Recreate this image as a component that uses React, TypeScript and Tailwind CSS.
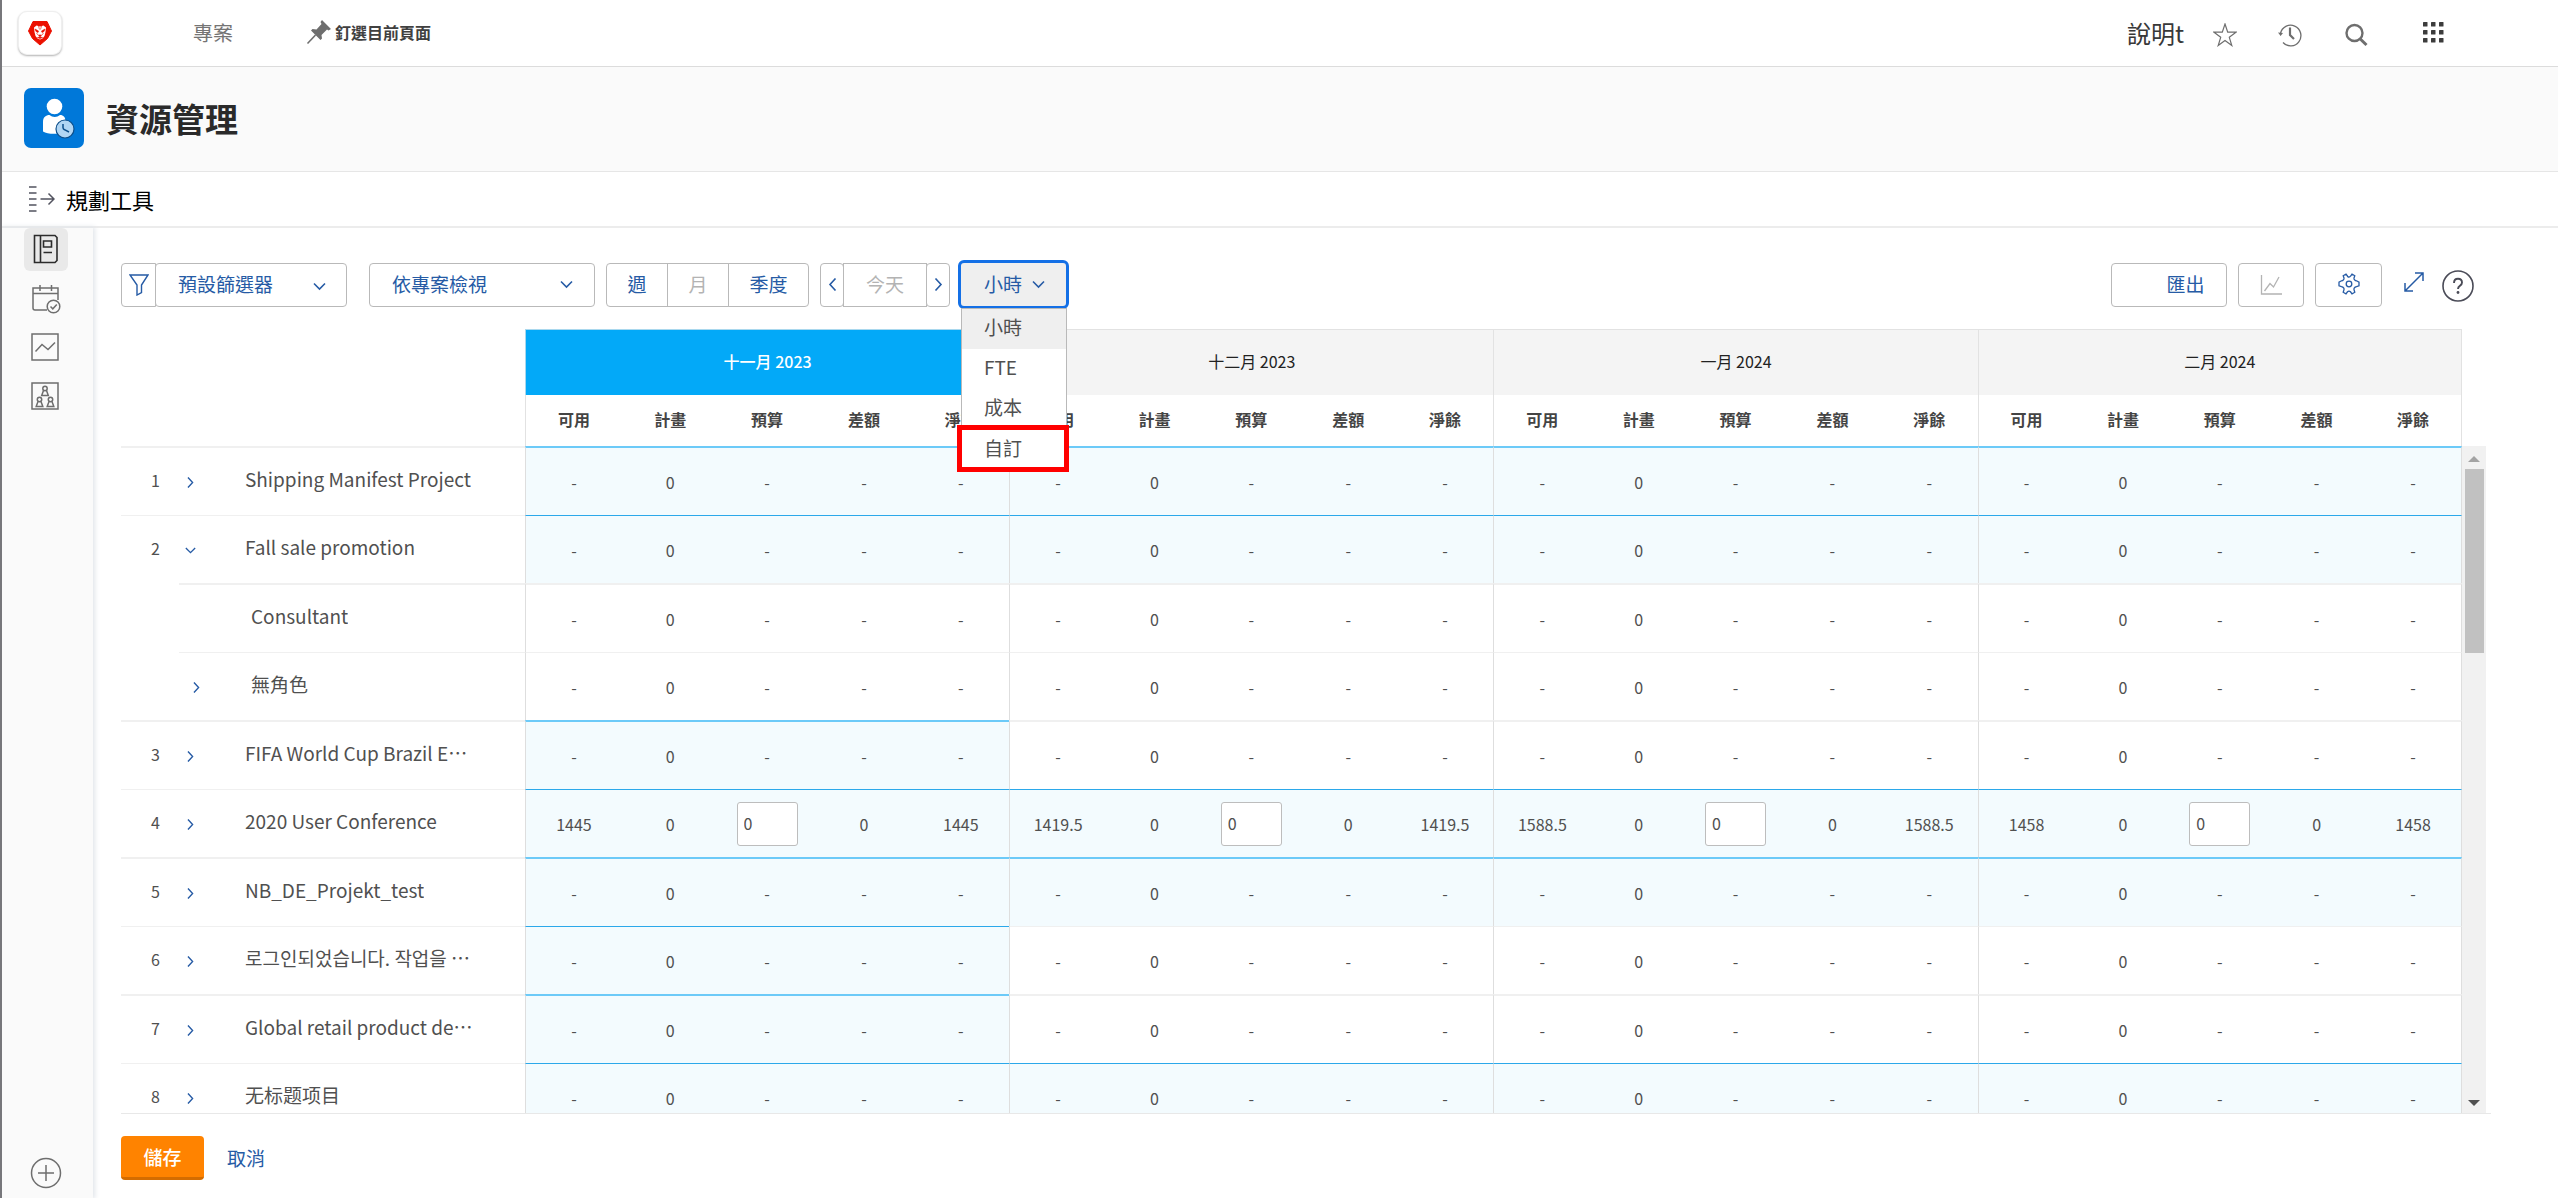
import React from "react";

const MONTHS = ["十一月 2023", "十二月 2023", "一月 2024", "二月 2024"];
const METRICS = ["可用", "計畫", "預算", "差額", "淨餘"];

type Row = {
  num?: string;
  name: string;
  open?: boolean;
  leaf?: boolean;
  tint: "all" | "first" | "none";
  hours?: string[];
};

const ROWS: Row[] = [
  { num: "1", name: "Shipping Manifest Project", tint: "all" },
  { num: "2", name: "Fall sale promotion", open: true, tint: "all" },
  { name: "Consultant", leaf: true, tint: "none" },
  { name: "無角色", tint: "none" },
  { num: "3", name: "FIFA World Cup Brazil E…", tint: "first" },
  { num: "4", name: "2020 User Conference", tint: "all", hours: ["1445", "1419.5", "1588.5", "1458"] },
  { num: "5", name: "NB_DE_Projekt_test", tint: "all" },
  { num: "6", name: "로그인되었습니다. 작업을 …", tint: "first" },
  { num: "7", name: "Global retail product de…", tint: "first" },
  { num: "8", name: "无标题项目", tint: "all" },
];

function Chevron({ dir = "down", className = "size-[13px]" }: { dir?: "down" | "left" | "right"; className?: string }) {
  const d = { down: "M1 3.5 6.5 9 12 3.5", left: "M9.5 0.5 4 6.5 9.5 12.5", right: "M3.5 0.5 9 6.5 3.5 12.5" }[dir];
  return (
    <svg viewBox="0 0 13 13" className={`fill-none stroke-current stroke-[1.6] ${className}`} aria-hidden="true">
      <path d={d} />
    </svg>
  );
}

function TopBar() {
  return (
    <header className="flex h-[67px] shrink-0 items-center border-b border-[#dcdcdc] bg-white pr-[114px] pl-4">
      <a href="#" aria-label="Home" className="flex size-11 items-center justify-center rounded-[9px] border border-[#efefef] bg-white shadow-[0_1px_2px_rgba(0,0,0,0.3)]">
        <svg viewBox="0 0 26 26" className="size-[26px]" aria-hidden="true">
          <path d="M6 1.5h14L24.500 11 20.500 18.500 13 25 5.500 18.500 1.500 11z" fill="#eb1000" stroke="#eb1000" strokeLinejoin="round" />
          <path d="M7 7.500 9.500 5.500 13 6.500 16.500 5.500 19 7.500 18.500 12 17.500 16 15.500 18.500 13 19.500 10.500 18.500 8.500 16 7.500 12z" fill="#fff" />
          <path d="M8 9 11.500 11 11 12.500 9 11.500zM18 9 14.500 11 15 12.500 17 11.500zM11.500 15h3L13.500 16.500h-1zM10.500 17.500 13 17l2.500.5L13 18.500zM11.500 6 12.500 9.500M14.500 6 13.500 9.500M9.500 13l1.500 2M16.500 13 15 15" fill="#eb1000" stroke="#eb1000" strokeWidth="0.600" />
        </svg>
      </a>
      <a href="#" className="ml-[131px] pb-px text-xl text-[#747474]">專案</a>
      <button type="button" className="ml-[73px] flex items-center gap-[3px] pb-0.5 text-base font-bold text-[#404040]">
        <svg viewBox="0 0 26 26" className="size-[26px]" aria-hidden="true">
          <path d="M16 1 25 10 22.500 11.500 21 10.500 15.500 16 16 19.500 14.500 21 5 11.500 6.500 10 10.500 10.500 15.500 5 14.500 3z" fill="#6e6e6e" />
          <path d="M9.500 16 1.500 24.500" stroke="#6e6e6e" strokeWidth="1.600" />
        </svg>
        釘選目前頁面
      </button>
      <div className="ml-auto flex items-center">
        <a href="#" className="pb-px text-2xl text-[#383838]">說明t</a>
        <button type="button" aria-label="Favorites" className="ml-[29px] flex pt-1">
          <svg viewBox="0 0 24 24" className="size-6 fill-none stroke-[#6e6e6e] stroke-[1.2]">
            <path d="M12 1 14.700 9.200H23L16.300 14.300 18.800 22.500 12 17.500 5.200 22.500 7.700 14.300 1 9.200H9.300z" />
          </svg>
        </button>
        <button type="button" aria-label="Recents" className="ml-[41px] flex pt-1">
          <svg viewBox="0 0 24 24" className="size-6 fill-none stroke-[#6e6e6e]">
            <path d="M2.500 10.500A10.300 10.300 0 1 1 5 19.500" strokeWidth="1.300" />
            <path d="M0 9.500 5 10 2.600 13z" className="fill-[#6e6e6e]" stroke="none" />
            <path d="M12 4.500V12L16 16" strokeWidth="2.200" />
          </svg>
        </button>
        <button type="button" aria-label="Search" className="ml-[42px] flex pt-1">
          <svg viewBox="0 0 24 24" className="size-6 fill-none stroke-[#6e6e6e]">
            <circle cx="10.500" cy="10" r="8" strokeWidth="2.400" />
            <path d="M15.800 15.500 22.500 22" strokeWidth="3" />
          </svg>
        </button>
        <button type="button" aria-label="Apps" className="ml-[55px] flex pb-px">
          <svg viewBox="0 0 21 21" className="size-[21px] fill-[#3c3c3c]">
            {[0, 8, 16].map((y) => [0, 8, 16].map((x) => <rect key={`${x}-${y}`} x={x} y={y} width="4.500" height="4.500" rx="0.600" />))}
          </svg>
        </button>
      </div>
    </header>
  );
}

function TitleBar() {
  return (
    <div className="flex h-[105px] shrink-0 items-center border-b border-[#e6e6e6] bg-[#fafafa] pb-0.5 pl-[22px]">
      <svg viewBox="0 0 60 60" className="size-[60px]" aria-hidden="true">
        <rect width="60" height="60" rx="7" fill="#0078d9" />
        <circle cx="30.500" cy="18.500" r="7.800" fill="#fff" />
        <path d="M19 34c0-5 3-7 6.500-7 3 2.500 7.500 2.500 10.500 0 3.500 0 5.500 2 5.500 7v10c-7 2.500-18 2.500-22.500-.5z" fill="#fff" />
        <circle cx="41" cy="41" r="9" fill="#b1d6f4" stroke="#0d4f8b" strokeWidth="1.200" />
        <path d="M39 36v3.500q0 1.500 1.500 2.200L45 44" fill="none" stroke="#0d4f8b" strokeWidth="1.500" />
      </svg>
      <h1 className="ml-[22px] text-[33px] leading-none font-bold text-[#2a2a2a]">資源管理</h1>
    </div>
  );
}

function SectionBar() {
  return (
    <div className="flex h-[56px] shrink-0 items-center border-b-2 border-[#ececec] bg-white pb-px pl-[27px]">
      <svg viewBox="0 0 26 26" className="size-[26px] fill-none stroke-[#52535f] stroke-[1.5]" aria-hidden="true">
        <path d="M0 1h7.500M0 7h7.500M0 13h7.500M0 19h7.500M0 25h7.500M11.500 13H25M19.500 7.500 25 13l-5.500 5.500" />
      </svg>
      <h2 className="ml-[11px] text-[22px] leading-none font-normal text-black">規劃工具</h2>
    </div>
  );
}

function Person({ x, y }: { x: number; y: number }) {
  return (
    <g transform={`translate(${x} ${y})`}>
      <circle cx="0" cy="2.500" r="2.200" />
      <path d="M-1.500 4.500-3.300 9.500H3.300L1.500 4.500" />
    </g>
  );
}

function SideNav() {
  return (
    <nav aria-label="Sections" className="relative z-10 flex w-[91px] shrink-0 flex-col bg-[#fafafa] pl-[22px] shadow-[1px_0_5px_1px_#e1e5ea]">
      <a href="#" aria-label="Planner" className="flex h-[43px] w-11 items-center justify-center rounded-md bg-[#e9e9e9] pb-0.5">
        <svg viewBox="0 0 26 30" className="h-[30px] w-[26px] fill-none stroke-[#2c2c2c] stroke-[1.6]">
          <path d="M1.500 1.500h20.500l2 2v23l-2 2H1.500zM7.500 1.500v27" />
          <path d="M10.500 7h8v6h-8zM10.500 18.500h8.500" />
        </svg>
      </a>
      <a href="#" aria-label="Scheduler" className="mt-[13px] ml-[7px] flex">
        <svg viewBox="0 0 30 30" className="size-[30px] fill-none stroke-[#6e6e6e] stroke-[1.5]">
          <path d="M16 26H4q-2 0-2-2V4h25v12M2 9.500h25M9 1v6M20.500 1v6" />
          <circle cx="22.500" cy="22.500" r="6.300" fill="#fafafa" />
          <path d="M19.500 22.500l2.300 2.300 4-4.300" />
        </svg>
      </a>
      <a href="#" aria-label="Utilization" className="mt-[19px] ml-[7px] flex">
        <svg viewBox="0 0 28 28" className="size-7 fill-none stroke-[#6e6e6e] stroke-[1.5]">
          <path d="M1 1h26v26H1zM4.500 18.500 11 11.500 17 16.500 24 9.500" />
        </svg>
      </a>
      <a href="#" aria-label="Resource pools" className="mt-[21px] ml-[7px] flex">
        <svg viewBox="0 0 28 28" className="size-7 fill-none stroke-[#6e6e6e] stroke-[1.5]">
          <path d="M1 1h26v26H1z" />
          <Person x={14} y={4} />
          <Person x={8.5} y={15} />
          <Person x={19.5} y={15} />
        </svg>
      </a>
      <button type="button" aria-label="Add" className="mt-auto mb-[9px] ml-[6px] flex">
        <svg viewBox="0 0 32 32" className="size-8 fill-none stroke-[#6e6e6e] stroke-[1.5]">
          <circle cx="16" cy="16" r="14.500" />
          <path d="M16 8v16M8 16h16" />
        </svg>
      </button>
    </nav>
  );
}

function Toolbar() {
  const box = "flex h-11 items-center justify-center border border-[#b9b9b9] bg-white";
  return (
    <div className="flex items-center pr-[84px] text-[19px] text-[#265ba5]">
      <button type="button" aria-label="Filter" className={`${box} w-[35px] rounded-l`}>
        <svg viewBox="0 0 20 22" className="h-[22px] w-5 fill-none stroke-current stroke-[1.4]">
          <path d="M1 1h18L12.500 11v7.500L8 21V11z" />
        </svg>
      </button>
      <label className="relative flex items-center">
        <select aria-label="篩選器" className="-ml-px h-11 w-[192px] appearance-none rounded border border-[#b9b9b9] bg-white pl-[22px]">
          <option>預設篩選器</option>
        </select>
        <Chevron className="pointer-events-none absolute top-[17px] right-[21px] size-[13px]" />
      </label>
      <label className="relative ml-[22px] flex items-center">
        <select aria-label="檢視" className="h-11 w-[226px] appearance-none rounded border border-[#b9b9b9] bg-white pl-[22px]">
          <option>依專案檢視</option>
        </select>
        <Chevron className="pointer-events-none absolute top-[15px] right-[22px] size-[13px]" />
      </label>
      <div className="ml-[11px] flex">
        <button type="button" className={`${box} w-[62px] rounded-l`}>週</button>
        <button type="button" disabled className={`${box} -ml-px w-[62px] text-[#b3b3b3]`}>月</button>
        <button type="button" className={`${box} -ml-px w-[81px] rounded-r`}>季度</button>
      </div>
      <div className="ml-[11px] flex">
        <button type="button" aria-label="Previous" className={`${box} w-6 rounded`}>
          <Chevron dir="left" />
        </button>
        <button type="button" disabled className={`${box} -ml-px w-[84px] text-[#b3b3b3]`}>今天</button>
        <button type="button" aria-label="Next" className={`${box} -ml-px w-6 rounded`}>
          <Chevron dir="right" />
        </button>
      </div>
      <div className="relative z-20 ml-2">
        <button type="button" aria-haspopup="listbox" aria-expanded="true" className="flex h-[49px] w-[111px] items-center rounded-md border-3 border-[#1470e6] bg-[#efefef] pl-[23px]">
          小時
          <Chevron className="ml-[10px] size-[13px]" />
        </button>
        <ul role="listbox" aria-label="單位" className="absolute top-12 left-[3px] w-[106px] border border-[#b9b9b9] bg-white text-[#505050]">
          <li role="option" aria-selected="true" className="flex h-10 items-center bg-[#efefef] pb-[3px] pl-[22px]">小時</li>
          <li role="option" aria-selected="false" className="flex h-10 items-center pb-[3px] pl-[22px]">FTE</li>
          <li role="option" aria-selected="false" className="flex h-10 items-center pb-[3px] pl-[22px]">成本</li>
          <li role="option" aria-selected="false" className="relative flex h-10 items-center pb-px pl-[22px]">
            自訂
            <span className="absolute -top-1 -right-[3px] -bottom-[3px] -left-[5px] border-5 border-[#ff0000]" />
          </li>
        </ul>
      </div>
      <button type="button" className={`${box} ml-auto w-[116px] rounded pl-[33px]`}>匯出</button>
      <button type="button" disabled aria-label="Chart" className={`${box} ml-[11px] w-[66px] rounded text-[#b3b3b3]`}>
        <svg viewBox="0 0 22 22" className="size-[22px] fill-none stroke-current stroke-[1.3]">
          <path d="M1.500 1v19H22M4.500 17 10 9.500 13.500 13 19 3" />
        </svg>
      </button>
      <button type="button" aria-label="Settings" className={`${box} ml-[11px] w-[67px] rounded`}>
        <svg viewBox="0 0 22 22" className="mb-0.5 size-[22px] fill-none stroke-current stroke-[1.3]">
          <circle cx="11" cy="11" r="2.800" />
          <path d="M9.500 4.200Q10 3.800 9.400 3L8 1.200 5.200 2.700 6 5Q6.300 6.200 5.300 6.900 4.500 7.600 3.500 7.800L1 9.200V12.800L3.500 13.700Q5 14 5.800 15.200 6.300 16 5.900 17L5.200 19.300 8 20.800 9.500 18.800Q10.200 18.200 11 18.200T12.500 18.800L14 20.800 16.800 19.300 16.100 17Q15.700 16 16.200 15.200 17 14 18.500 13.700L21 12.800V9.200L18.500 7.800Q17.500 7.600 16.700 6.900 15.700 6.200 16 5L16.800 2.700 14 1.200 12.600 3Q12 4 11 4T9.500 4.200" />
        </svg>
      </button>
      <button type="button" aria-label="Full screen" className="mb-[5px] ml-[22px] flex">
        <svg viewBox="0 0 20 20" className="size-5 fill-none stroke-current stroke-[1.5]">
          <path d="M11 1h8v8M19 1 1 19M1 11v8h8" />
        </svg>
      </button>
      <button type="button" aria-label="Help" className="ml-[18px] flex pt-0.5 text-[#4a4b57]">
        <svg viewBox="0 0 32 32" className="size-8 fill-none stroke-current stroke-[1.6]">
          <circle cx="16" cy="16" r="15" />
          <path d="M12 13c0-2.700 1.700-4.300 4-4.300s4 1.600 4 3.800c0 3.500-4 3.200-4 6.500" strokeWidth="1.900" />
          <circle cx="16" cy="22.500" r="1.400" className="fill-current" stroke="none" />
        </svg>
      </button>
    </div>
  );
}

function PlanCells({ row, month }: { row: Row; month: number }) {
  const tinted = row.tint === "all" || (row.tint === "first" && month === 0);
  const hours = row.hours?.[month];
  const values = hours ? [hours, "0", "input", "0", hours] : ["-", "0", "-", "-", "-"];
  return (
    <>
      {values.map((v, i) => (
        <td
          key={i}
          className={`p-0 text-center text-base group-odd:border-t-2 group-even:border-t ${i === 0 ? "border-l border-l-[#dedede]" : ""} ${
            month === 3 && i === 4 ? "border-r border-r-[#dedede]" : ""
          } ${tinted ? "bg-[#f3fbfe] group-odd:border-t-[#6ccaf8] group-even:border-t-[#2ba8ea]" : "border-t-[#f0f0f0]"}`}
        >
          {v === "input" ? (
            <input aria-label={`${row.name} ${MONTHS[month]} 預算`} defaultValue="0" className="mx-auto block h-11 w-[61px] rounded-[3px] border border-[#bdbdbd] bg-white px-[6px] pb-0.5" />
          ) : (
            v
          )}
        </td>
      ))}
    </>
  );
}

function Planner() {
  return (
    <div className="mt-5 mr-[67px] flex min-h-0 flex-1 overflow-hidden border-b border-[#e8e8e8] pr-[5px]">
      <div className="min-w-0 flex-1">
        <table className="w-full table-fixed border-separate border-spacing-0 text-[#505050]">
          <colgroup>
            <col className="w-[58px]" />
            <col className="w-[346px]" />
            {MONTHS.map((m) => METRICS.map((k) => <col key={m + k} />))}
          </colgroup>
          <thead>
            <tr className="h-[66px]">
              <td colSpan={2} rowSpan={2} />
              {MONTHS.map((m, i) => (
                <th
                  key={m}
                  colSpan={5}
                  scope="colgroup"
                  className={`border-t border-l p-0 pb-1 text-base ${i === 0 ? "border-[#a9d8ee] bg-[#03a9f8] font-medium text-white" : "border-[#e2e2e2] bg-[#f4f4f4] font-normal text-[#222]"} ${i === 3 ? "border-r" : ""}`}
                >
                  {m}
                </th>
              ))}
            </tr>
            <tr className="h-[51px]">
              {MONTHS.map((m, i) =>
                METRICS.map((k, j) => (
                  <th key={m + k} scope="col" className={`p-0 pb-1 text-base font-bold text-[#444] ${j === 0 ? "border-l border-[#e2e2e2]" : ""} ${i === 3 && j === 4 ? "border-r border-[#e2e2e2]" : ""}`}>
                    {k}
                  </th>
                )),
              )}
            </tr>
          </thead>
          <tbody>
            {ROWS.map((row) => (
              <tr key={row.name} className="group odd:h-[69px] even:h-[68px]">
                <td className={`p-0 pb-1 pl-[30px] text-base group-odd:border-t-2 group-even:border-t ${row.num ? "border-[#f0f0f0]" : "border-transparent"}`}>{row.num}</td>
                <th scope="row" className="border-[#f0f0f0] p-0 pb-[5px] text-left font-normal group-odd:border-t-2 group-even:border-t">
                  <div className={`flex items-center ${row.num ? "" : "pl-[6px]"}`}>
                    {row.leaf ? (
                      <span className="w-[22px]" />
                    ) : (
                      <button type="button" aria-label={row.open ? "Collapse" : "Expand"} className="flex w-[22px] justify-center pt-[6px] text-[#265ba5]">
                        <Chevron dir={row.open ? "down" : "right"} className="size-[11px] stroke-2" />
                      </button>
                    )}
                    <span className="ml-11 truncate text-[19px]">{row.name}</span>
                  </div>
                </th>
                {MONTHS.map((m, i) => (
                  <PlanCells key={m} row={row} month={i} />
                ))}
              </tr>
            ))}
          </tbody>
        </table>
      </div>
      <div className="mt-[117px] flex w-6 flex-col items-center bg-[#f1f1f1]">
        <svg viewBox="0 0 12 6" className="mt-[10px] h-[6px] w-3 fill-[#a3a3a3]" aria-hidden="true">
          <path d="M6 0 12 6H0z" />
        </svg>
        <div className="mt-[7px] h-[184px] w-[19px] bg-[#c1c1c1]" />
        <svg viewBox="0 0 12 6" className="mt-auto mb-[7px] h-[6px] w-3 fill-[#505050]" aria-hidden="true">
          <path d="M6 6 0 0H12z" />
        </svg>
      </div>
    </div>
  );
}

export default function App() {
  return (
    <div lang="zh-Hant" className="flex h-screen flex-col overflow-hidden border-l-2 border-[#77777b] bg-white font-['Noto_Sans_CJK_TC',sans-serif]">
      <TopBar />
      <TitleBar />
      <SectionBar />
      <div className="flex min-h-0 flex-1">
        <SideNav />
        <main className="flex min-w-0 flex-1 flex-col pt-8 pl-7">
          <Toolbar />
          <Planner />
          <div className="flex items-center gap-[23px] pt-[22px] pb-[18px] text-[19px]">
            <button type="button" className="h-11 w-[83px] rounded border-b-3 border-[#d46c00] bg-[#ff8300] pt-0.5 font-medium text-white">儲存</button>
            <a href="#" className="text-[#265ba5]">取消</a>
          </div>
        </main>
      </div>
    </div>
  );
}
